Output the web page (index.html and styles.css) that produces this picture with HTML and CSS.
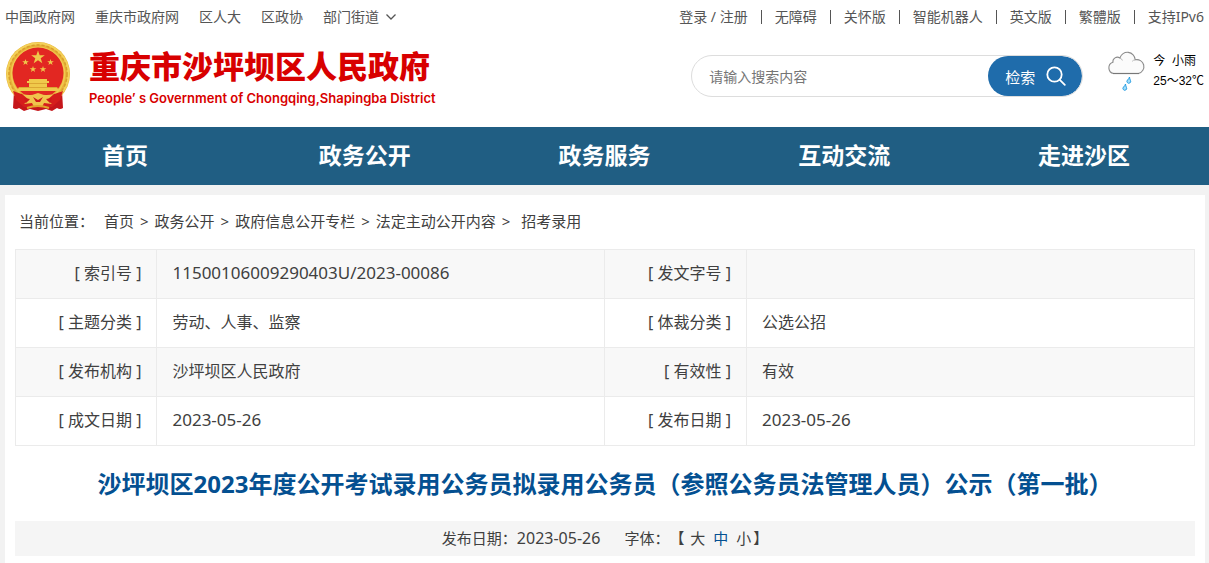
FILE: index.html
```html
<!DOCTYPE html>
<html lang="zh-CN">
<head>
<meta charset="utf-8">
<meta name="viewport" content="width=device-width, initial-scale=1">
<title>重庆市沙坪坝区人民政府</title>
<link rel="stylesheet" href="styles.css">
</head>
<body>
<header class="site-header">
  <div class="topbar">
    <ul class="top-links">
      <li><a href="#">中国政府网</a></li>
      <li><a href="#">重庆市政府网</a></li>
      <li><a href="#">区人大</a></li>
      <li><a href="#">区政协</a></li>
      <li><a href="#" class="with-arrow">部门街道<svg width="12" height="8" viewBox="0 0 12 8" fill="none" stroke="#555" stroke-width="1.3"><path d="M1.5 1.5 6 6l4.500-4.500"/></svg></a></li>
    </ul>
    <ul class="top-tools">
      <li><a href="#">登录</a> / <a href="#">注册</a></li>
      <li><a href="#">无障碍</a></li>
      <li><a href="#">关怀版</a></li>
      <li><a href="#">智能机器人</a></li>
      <li><a href="#">英文版</a></li>
      <li><a href="#">繁體版</a></li>
      <li><a href="#">支持IPv6</a></li>
    </ul>
  </div>
  <div class="banner">
    <a href="#" class="brand">
      <svg class="emblem" width="66" height="70" viewBox="0 0 66 70" aria-hidden="true">
        <path d="M9 49 8 66q3 2 6 0l5 3 6-2 8 2 8-2 6 2 5-3q3 2 6 0l-1-17z" fill="#c5161b"/>
        <circle cx="33" cy="32" r="32" fill="#e8b53a"/>
        <circle cx="33" cy="32" r="30.500" fill="none" stroke="#f4d25a" stroke-width="2"/>
        <circle cx="33" cy="32" r="29" fill="none" stroke="#d99f2b" stroke-width="1.500" stroke-dasharray="3 2"/>
        <circle cx="33" cy="32" r="26.500" fill="none" stroke="#f1cb50" stroke-width="1.500"/>
        <circle cx="33" cy="31" r="25.500" fill="#e22722"/>
        <g fill="#efc94b">
          <path d="m33 8.500 1.700 4.800h5.100l-4.100 3 1.600 4.900-4.300-3-4.300 3 1.600-4.900-4.100-3h5.100z"/>
          <path d="m20.500 17 .8 2.300h2.500l-2 1.400.8 2.400-2.100-1.500-2.100 1.500.8-2.400-2-1.400h2.500zM45.500 17l.8 2.300h2.500l-2 1.400.8 2.400-2.100-1.500-2.100 1.500.8-2.400-2-1.400h2.500zM28 24l.8 2.300h2.500l-2 1.400.8 2.400-2.100-1.500-2.100 1.500.8-2.400-2-1.400h2.500zM38 24l.8 2.300h2.500l-2 1.400.8 2.400-2.100-1.500-2.100 1.500.8-2.400-2-1.400h2.500z"/>
          <path d="M24 37h18v2h2v2H22v-2h2zM24 41h18v4h10l2 4H12l2-4h10z"/>
        </g>
        <path d="M24 41.500h18M14 45.500h38" stroke="#d3962a" stroke-width=".7"/>
        <path d="M8 49q12 5 19 3l6 3 6-3q7 2 19-3l-3 9-8 7H19l-8-7z" fill="#d51d1c"/>
        <path d="M17 52q9 2 13 0l3-1 3 1q4 2 13 0l-7 6 5 4-8-1-2 4h-8l-2-4-8 1 5-4z" fill="#f0c54c"/>
        <path d="m19 56 6 1-4 4zM47 56l-6 1 4 4zM28 55l5 3 5-3-3 5h-4z" fill="#cc1b1a"/>
        <path d="M22 66q11-4 22 0" fill="none" stroke="#e2a52c" stroke-width="2"/>
      </svg>
      <span class="brand-text">
        <strong class="brand-name">重庆市沙坪坝区人民政府</strong>
        <span class="brand-en">People’ s Government of Chongqing,Shapingba District</span>
      </span>
    </a>
    <div class="banner-side">
      <form class="search" onsubmit="return false">
        <input class="search-input" type="text" placeholder="请输入搜索内容" aria-label="请输入搜索内容">
        <button class="search-button" type="submit">检索<svg width="20" height="20" viewBox="0 0 20 20" fill="none" stroke="#fff" stroke-width="1.800" stroke-linecap="round"><circle cx="8.500" cy="8.500" r="7.200"/><path d="m13.800 13.800 5 5"/></svg></button>
      </form>
      <div class="weather">
        <svg width="38" height="40" viewBox="0 0 38 40">
          <path d="M6.500 22.500a5.800 5.800 0 0 1-.6-11.200 4.500 4.500 0 0 1 7-4.300 7.800 7.800 0 0 1 15.300 1.800 7 7 0 0 1 3.300 13.700z" fill="#fbfbfb" stroke="#8c8c8c" stroke-width="1.100"/>
          <path d="M12.900 7q2 .7 2.500 2.500M28.200 8.800q-2 .3-3 1.500" fill="none" stroke="#b9b9b9"/>
          <path d="M6 22.500h26" stroke="#777" stroke-width="1.200"/>
          <path d="M22.500 26q-.7 2-2 3a1.900 1.900 0 1 0 3 .5q-.8-1.500-1-3.500zM18.500 33q-.7 2-2 3a1.900 1.900 0 1 0 3 .5q-.8-1.500-1-3.500z" fill="#9fdcfa" stroke="#1d97df" stroke-width=".9"/>
        </svg>
        <div class="weather-text"><span>今&nbsp; 小雨</span><span>25～32℃</span></div>
      </div>
    </div>
  </div>
</header>
<nav class="main-nav">
  <a href="#">首页</a>
  <a href="#">政务公开</a>
  <a href="#">政务服务</a>
  <a href="#">互动交流</a>
  <a href="#">走进沙区</a>
</nav>
<main class="content">
  <div class="breadcrumb">
    <span class="crumb-label">当前位置：</span>
    <a href="#">首页</a><i>&gt;</i><a href="#">政务公开</a><i>&gt;</i><a href="#">政府信息公开专栏</a><i>&gt;</i><a href="#">法定主动公开内容</a><i>&gt;</i><a href="#" class="current">招考录用</a>
  </div>
  <table class="info">
    <colgroup><col class="col-label"><col class="col-value"><col class="col-label"><col class="col-value"></colgroup>
    <tbody>
      <tr><th scope="row">[ 索引号 ]</th><td class="num">11500106009290403U/2023-00086</td><th scope="row">[ 发文字号 ]</th><td></td></tr>
      <tr><th scope="row">[ 主题分类 ]</th><td>劳动、人事、监察</td><th scope="row">[ 体裁分类 ]</th><td>公选公招</td></tr>
      <tr><th scope="row">[ 发布机构 ]</th><td>沙坪坝区人民政府</td><th scope="row">[ 有效性 ]</th><td>有效</td></tr>
      <tr><th scope="row">[ 成文日期 ]</th><td class="num">2023-05-26</td><th scope="row">[ 发布日期 ]</th><td class="num">2023-05-26</td></tr>
    </tbody>
  </table>
  <h1 class="title">沙坪坝区2023年度公开考试录用公务员拟录用公务员（参照公务员法管理人员）公示（第一批）</h1>
  <div class="meta">
    <span>发布日期：<span class="meta-date">2023-05-26</span></span>
    <span class="font-size">字体：【 <a href="#">大</a> <a href="#" class="active">中</a> <a href="#">小</a>】</span>
  </div>
</main>
</body>
</html>
```
FILE: styles.css
```css
* {
  box-sizing: border-box;
}

body {
  margin: 0;
  min-height: 100vh;
  display: flex;
  flex-direction: column;
  background: #f2f2f2;
  color: #404040;
  font-family: "Noto Sans", "Noto Sans CJK SC", sans-serif;
  font-size: 16px;
  text-spacing-trim: space-all;
}

a {
  color: inherit;
  text-decoration: none;
}

.site-header {
  background: #fff;
  padding: 0 5px 15px;
}

.topbar {
  display: flex;
  justify-content: space-between;
  height: 34px;
  font-size: 14px;
  line-height: 34px;
  color: #555;
  white-space: nowrap;
}

.top-links,
.top-tools {
  display: flex;
  margin: 0;
  padding: 0;
  list-style: none;
}

.top-links {
  gap: 20px;
}

.top-tools {
  align-items: center;
  line-height: 14px;
}

.top-tools li + li {
  margin-left: 13px;
  padding-left: 13px;
  border-left: 1px solid #555;
}

.with-arrow {
  display: flex;
  align-items: center;
  gap: 6px;
}

.banner {
  display: flex;
  justify-content: space-between;
  align-items: flex-start;
  padding-top: 8px;
}

.brand {
  display: flex;
  gap: 18px;
  color: #d80000;
}

.emblem {
  flex: none;
}

.brand-text {
  display: flex;
  flex-direction: column;
  white-space: nowrap;
}

.brand-name {
  font-family: "Noto Sans CJK SC", sans-serif;
  font-size: 31px;
  font-weight: 900;
  line-height: 46px;
}

.brand-en {
  font-family: Inter, sans-serif;
  font-size: 13px;
  font-weight: 600;
  line-height: 20px;
}

.banner-side {
  display: flex;
  align-items: flex-start;
  gap: 24px;
}

.search {
  display: flex;
  width: 392px;
  height: 42px;
  margin-top: 13px;
  border: 1px solid #ddd;
  border-radius: 21px;
  overflow: hidden;
}

.search-input {
  flex: 1;
  min-width: 0;
  border: 0;
  padding: 0 17px;
  background: none;
  font: inherit;
  font-size: 14px;
  outline: none;
}

.search-input::placeholder {
  color: #757575;
}

.search-button {
  display: flex;
  align-items: center;
  gap: 11px;
  border: 0;
  border-radius: 20px;
  padding: 0 16px 0 17px;
  background: #1f6cab;
  color: #fff;
  font: inherit;
  font-size: 15px;
}

.weather {
  display: flex;
  align-items: flex-start;
  gap: 8px;
  padding-top: 9px;
  color: #000;
  font-family: "Liberation Sans", "Noto Sans CJK SC", sans-serif;
  font-size: 12px;
  line-height: 20px;
  white-space: nowrap;
}

.weather-text {
  display: flex;
  flex-direction: column;
}

.main-nav {
  display: grid;
  grid-template-columns: repeat(5, 1fr);
  padding: 0 5px 2px;
  background: #205e83;
  color: #fff;
  font-size: 23px;
  font-weight: 700;
  line-height: 56px;
  text-align: center;
}

.content {
  flex: 1;
  margin: 10px 4px 0 5px;
  padding: 0 10px 6px;
  background: #fff;
}

.breadcrumb {
  padding: 0 4px 1px;
  font-size: 15px;
  line-height: 53px;
}

.crumb-label {
  margin-right: 6px;
}

.breadcrumb i {
  margin: 0 6px;
  font-style: normal;
}

.current {
  margin-left: 5px;
}

.info {
  width: 100%;
  table-layout: fixed;
  border-collapse: collapse;
}

.col-label {
  width: 12%;
}

.col-value {
  width: 38%;
}

.info tr:nth-child(odd) {
  background: #f8f8f8;
}

.info th,
.info td {
  height: 49px;
  padding: 0 15px 2px;
  border: 1px solid #ebebeb;
  font-weight: 400;
  line-height: 46px;
  text-align: left;
}

.info th {
  text-align: right;
}

.info .num {
  font-size: 17px;
}

.title {
  margin: 18px 0;
  color: #045091;
  font-size: 24px;
  font-weight: 700;
  line-height: 39px;
  text-align: center;
}

.meta {
  display: flex;
  justify-content: center;
  gap: 24px;
  background: #f5f5f5;
  font-size: 15px;
  line-height: 35px;
}

.meta-date {
  font-size: 16px;
}

.font-size a {
  margin: 0 2px;
}

.font-size .active {
  color: #045091;
}
```
